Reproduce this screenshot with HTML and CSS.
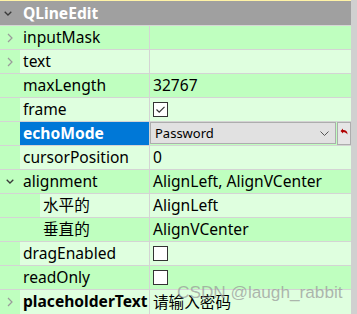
FILE: index.html
```html
<!DOCTYPE html>
<html>
<head>
<meta charset="utf-8">
<link rel="stylesheet" href="styles.css">
</head>
<body>
<div class="page">
  <div class="table">
    <div class="topline"></div>
    <div class="header">
      <span class="hexp"><svg width="8" height="5" viewBox="0 0 8 5"><polyline points="0.7,0.7 4,4 7.3,0.7" fill="none" stroke="#3a3a3a" stroke-width="1.3"/></svg></span>
      <span class="htext">QLineEdit</span>
    </div>

    <div class="row dark">
      <div class="name"><div class="indent"><svg class="chev" width="6" height="10" viewBox="0 0 6 10"><polyline points="1,1 5,5 1,9" fill="none" stroke="#9a9a9a" stroke-width="1.2"/></svg></div><div class="label">inputMask</div></div>
      <div class="value"></div>
    </div>
    <div class="row light">
      <div class="name"><div class="indent"><svg class="chev" width="6" height="10" viewBox="0 0 6 10"><polyline points="1,1 5,5 1,9" fill="none" stroke="#9a9a9a" stroke-width="1.2"/></svg></div><div class="label">text</div></div>
      <div class="value"></div>
    </div>
    <div class="row dark">
      <div class="name"><div class="indent"></div><div class="label">maxLength</div></div>
      <div class="value">32767</div>
    </div>
    <div class="row light">
      <div class="name"><div class="indent"></div><div class="label">frame</div></div>
      <div class="value"><span class="check"><svg width="13" height="13" viewBox="0 0 13 13"><polyline points="2.5,6.5 5.2,9.2 10.5,3.8" fill="none" stroke="#333" stroke-width="1.2"/></svg></span></div>
    </div>
    <div class="row dark sel">
      <div class="name"><div class="indent"></div><div class="label bold">echoMode</div></div>
      <div class="value combo-cell">
        <div class="combo"><span class="ctext">Password</span><svg width="9" height="5" viewBox="0 0 9 5"><polyline points="0.5,0.5 4.5,4.5 8.5,0.5" fill="none" stroke="#555" stroke-width="1"/></svg></div>
        <div class="reset"><svg width="8" height="8" viewBox="0 0 8 8"><path d="M0.5,3 L3,0.5 L3,2 C5.5,2 7.5,3 7.5,6.5 C6.5,4.8 5,4.2 3,4.2 L3,5.5 Z" fill="#b00000"/></svg></div>
      </div>
    </div>
    <div class="row light">
      <div class="name"><div class="indent"></div><div class="label">cursorPosition</div></div>
      <div class="value">0</div>
    </div>
    <div class="row dark">
      <div class="name"><div class="indent"><svg class="chev" width="8" height="5" viewBox="0 0 8 5"><polyline points="0.7,0.7 4,4 7.3,0.7" fill="none" stroke="#3a3a3a" stroke-width="1.3"/></svg></div><div class="label">alignment</div></div>
      <div class="value">AlignLeft, AlignVCenter</div>
    </div>
    <div class="row light">
      <div class="name"><div class="indent sub"></div><div class="label">水平的</div></div>
      <div class="value">AlignLeft</div>
    </div>
    <div class="row dark">
      <div class="name"><div class="indent sub"></div><div class="label">垂直的</div></div>
      <div class="value">AlignVCenter</div>
    </div>
    <div class="row light">
      <div class="name"><div class="indent"></div><div class="label">dragEnabled</div></div>
      <div class="value"><span class="check"></span></div>
    </div>
    <div class="row dark">
      <div class="name"><div class="indent"></div><div class="label">readOnly</div></div>
      <div class="value"><span class="check"></span></div>
    </div>
    <div class="row light last">
      <div class="name"><div class="indent"><svg class="chev" width="6" height="10" viewBox="0 0 6 10"><polyline points="1,1 5,5 1,9" fill="none" stroke="#9a9a9a" stroke-width="1.2"/></svg></div><div class="label bold">placeholderText</div></div>
      <div class="value">请输入密码</div>
    </div>
  </div>
  <div class="scroll"></div>
  <div class="watermark">CSDN @laugh_rabbit</div>
</div>
</body>
</html>
```

FILE: styles.css
```css
html, body {
  margin: 0;
  padding: 0;
  background: #ffffff;
}

.page {
  position: relative;
  display: flex;
  width: 357px;
  height: 314px;
  overflow: hidden;
  font-family: "Noto Sans", "Noto Sans CJK SC", sans-serif;
  font-size: 15.6px;
  color: #000;
}

.table {
  width: 351px;
  display: flex;
  flex-direction: column;
}

.scroll {
  width: 6px;
  background: #d0d0d0;
}

.topline {
  height: 1px;
  background: #fff3a6;
}

.header {
  height: 24px;
  border-bottom: 1px solid #d6d6d6;
  background: #a0a0a0;
  display: flex;
  align-items: center;
}

.hexp {
  width: 20px;
  display: flex;
  justify-content: center;
  padding-right: 4px;
  box-sizing: border-box;
  margin-top: 1px;
}

.htext {
  color: #ffffff;
  font-weight: bold;
  padding-left: 3px;
  line-height: 23px;
}

.row {
  display: flex;
  height: 23px;
  border-bottom: 1px solid #d4d4d4;
  line-height: 23px;
}

.row.last {
  border-bottom: none;
  height: 24px;
}

.row.dark {
  background: #bfffbf;
}

.row.light {
  background: #dfffdf;
}

.name {
  width: 149px;
  border-right: 1px solid #d4d4d4;
  display: flex;
  flex-shrink: 0;
}

.indent {
  width: 20px;
  flex-shrink: 0;
  background: #bfffbf;
  display: flex;
  align-items: center;
  justify-content: center;
}

.indent.sub {
  width: 40px;
}

.chev {
  display: block;
  margin-left: -1px;
}

.label {
  flex: 1;
  padding-left: 3px;
  white-space: nowrap;
  overflow: hidden;
}

.bold {
  font-weight: bold;
}

.row.sel .label {
  background: #0078d7;
  color: #ffffff;
}

.value {
  flex: 1;
  padding-left: 3px;
  white-space: nowrap;
  overflow: hidden;
  display: flex;
  align-items: center;
}

.value.combo-cell {
  padding-left: 0;
  align-items: flex-start;
  background: #bfffbf;
}

.check {
  width: 13px;
  height: 13px;
  border: 1px solid #333333;
  background: #ffffff;
  display: flex;
}

.combo {
  width: 186px;
  height: 22px;
  box-sizing: border-box;
  border: 1px solid #adadad;
  background: #e1e1e1;
  display: flex;
  align-items: center;
  justify-content: space-between;
  padding: 0 6px 0 4px;
  font-size: 13px;
  line-height: 20px;
}

.reset {
  margin-left: 1px;
  width: 14px;
  height: 23px;
  box-sizing: border-box;
  border: 1px solid #adadad;
  background: #e6e6e6;
  display: flex;
  align-items: center;
  justify-content: center;
  padding-bottom: 3px;
}

.watermark {
  position: absolute;
  left: 177px;
  top: 280px;
  font-family: "Liberation Sans", Arial, sans-serif;
  font-size: 17.2px;
  line-height: 24px;
  color: rgba(150, 150, 150, 0.7);
  white-space: nowrap;
}
```
